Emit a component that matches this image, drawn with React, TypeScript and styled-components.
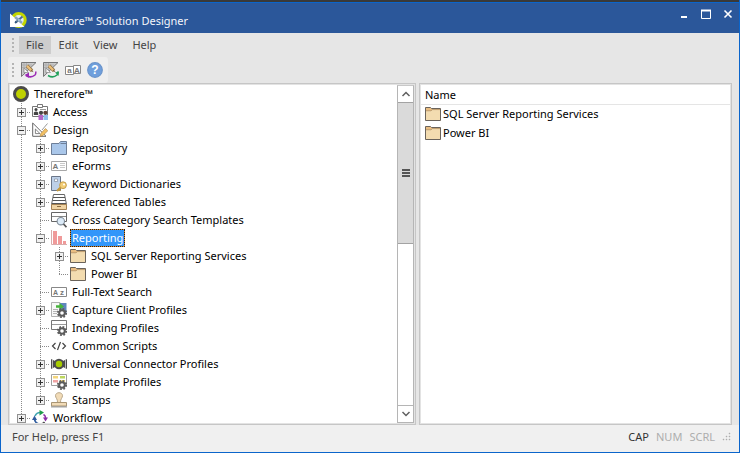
import React from "react";
import styled, { createGlobalStyle, css } from "styled-components";

const GlobalStyle = createGlobalStyle`
  * { box-sizing: border-box; }
  html, body { margin: 0; padding: 0; }
  body {
    font-family: "Noto Sans", "Open Sans", sans-serif;
    font-size: 11px;
    line-height: 18px;
    color: #000;
  }
  button { font: inherit; color: inherit; border: 0; padding: 0; background: none; }
`;

/* ---------- icons ---------- */

const ink = "#5c5c5c";

const Svg = styled.svg.attrs<{ $size?: number }>({ "aria-hidden": true })<{ $size?: number }>`
  display: block;
  flex: none;
  width: ${(p) => p.$size ?? 16}px;
  height: ${(p) => p.$size ?? 16}px;
`;

const Glyph = styled.text`
  font-family: "Liberation Sans", sans-serif;
  font-weight: 700;
  fill: #777;
`;

const Gear = () => (
  <g transform="translate(11 11)">
    <circle r="4.2" fill="none" stroke={ink} strokeWidth="1.8" strokeDasharray="1.8 1.5" />
    <circle r="2.8" fill="#fff" stroke={ink} strokeWidth="2" />
  </g>
);

const AppLogo = () => (
  <Svg $size={17} viewBox="0 0 17 17">
    <circle cx="8.7" cy="8" r="6.5" fill="#e4edf2" stroke="#c3d600" strokeWidth="3" />
    <path d="M0 1.5 V15 H14.5 Z" fill="#fff" />
    <path d="M5 5 L12 11" stroke="#8ba5bb" strokeWidth="2.4" />
    <path d="M5 11 L12.5 4.5" stroke="#4d6f92" strokeWidth="2" />
    <path d="M5 8.5 V11 H7.5 Z" fill="#34577f" />
    <circle cx="8.8" cy="8" r="1.2" fill="#a9c2d6" />
  </Svg>
);

const RootIcon = () => (
  <Svg viewBox="0 0 16 16">
    <circle cx="8" cy="8" r="6.5" fill="#bfd100" stroke="#4b4b4b" strokeWidth="3" />
  </Svg>
);

const AccessIcon = () => (
  <Svg viewBox="0 0 16 16">
    <path d="M.5 2.5 H15.5 V12.5 H.5 Z" fill="#fff" stroke="#777" />
    <path d="M5.5 .5 H10.5 V3.5 H5.5 Z" fill="#fff" stroke="#777" />
    <circle cx="4" cy="5.6" r="1.5" fill="#444" />
    <path d="M1.8 11 V8.4 Q4 6.6 6.2 8.4 V11 Z" fill="#444" />
    <path d="M8 5.5 H14" stroke="#999" />
    <circle cx="9" cy="8.8" r="2.1" fill="#444" />
    <circle cx="13.4" cy="8.8" r="2.1" fill="#5e4036" />
    <path d="M6.5 11 H11 V16 H6.5 Z" fill="#b565c7" />
    <path d="M11.5 11 H16 V16 H11.5 Z" fill="#8fc0ee" />
  </Svg>
);

const DesignIcon = () => (
  <Svg viewBox="0 0 16 16">
    <path d="M.7 1 V14.3 H14 Z" fill="#fff" stroke="#666" />
    <path d="M3.4 7 V11.6 H8 Z" fill="#fff" stroke="#777" strokeWidth=".9" />
    <path d="M15.5 1.5 L10 8" stroke="#999" />
    <path d="M8 14.5 L8.8 11.5 L13.5 6.5 L15.8 8.7 L11 13.5 Z" fill="#f2c063" stroke="#a98243" strokeWidth=".6" />
  </Svg>
);

const TanFolder = () => (
  <Svg viewBox="0 0 16 16">
    <path d="M.5 14.5 V1.5 H5.5 L6.5 2.5 H15.5 V14.5 Z" fill="#e9bd82" stroke="#6a635b" />
    <path d="M1 5 H6 L7.5 3.7 H15 V14 H1 Z" fill="#f3dcb0" />
    <path d="M1 4.8 H6 L7.5 3.6 H15" fill="none" stroke="#a08560" strokeWidth=".6" />
  </Svg>
);

const BlueFolder = () => (
  <Svg viewBox="0 0 16 16">
    <path d="M.5 14.5 V3.5 H8 L9.5 1.5 H15.5 V14.5 Z" fill="#aac7ea" stroke="#6e7f98" />
    <path d="M9.5 3.5 H15" stroke="#6e7f98" />
  </Svg>
);

const FormIcon = () => (
  <Svg viewBox="0 0 16 16">
    <path d="M.5 3.5 H15.5 V12.5 H.5 Z" fill="#fff" stroke="#a8a8a8" />
    <Glyph x="1.6" y="11" fontSize="8">A</Glyph>
    <path d="M9 5.5 H14 M9 7.5 H14 M9 9.5 H14" stroke="#c8c8c8" />
  </Svg>
);

const KeywordIcon = () => (
  <Svg viewBox="0 0 16 16">
    <path d="M.5 .5 H9.5 V14.5 H.5 Z" fill="#bdd0e8" stroke="#6b7688" />
    <path d="M3.5 3 H6.5 V5.5 H3.5 Z" fill="#fff" stroke="#7f8b9c" strokeWidth=".7" />
    <path d="M10.5 10.5 L6 15" stroke="#c79b3d" strokeWidth="2" />
    <path d="M7.5 12.8 L9.5 14.8" stroke="#c79b3d" strokeWidth="1.3" />
    <circle cx="12" cy="9.2" r="3.4" fill="#f4cf78" stroke="#b88d38" strokeWidth=".8" />
    <circle cx="13" cy="8.4" r="1" fill="#fff" />
  </Svg>
);

const TablesIcon = () => (
  <Svg viewBox="0 0 16 16">
    <path d="M2.5 .5 H13.5 L15.5 10.5 H.5 Z" fill="#fff" stroke="#666" />
    <path d="M2 3.5 H14 M1.6 6.5 H14.4" stroke="#555" />
    <path d="M1 9.5 H15" stroke="#555" />
    <path d="M.5 10.5 H15.5 V15.5 H.5 Z" fill="#f0d3a2" stroke="#a48152" />
    <path d="M6 12.5 H10" stroke="#8b6b40" />
  </Svg>
);

const SearchTemplateIcon = () => (
  <Svg viewBox="0 0 16 16">
    <path d="M.5 .5 H15.5 V9.5 H.5 Z" fill="#fff" stroke="#666" />
    <path d="M1 4.5 H15" stroke="#888" />
    <circle cx="9.8" cy="9.2" r="3.7" fill="#dcebf8" stroke="#7d8995" strokeWidth="1.1" />
    <path d="M12.5 12 L15.5 15.2" stroke="#555" strokeWidth="1.8" />
  </Svg>
);

const ReportIcon = () => (
  <Svg viewBox="0 0 16 16">
    <path d="M.5 0 V14.5 H16" fill="none" stroke="#d8adad" />
    <path d="M2 1 H6 V14 H2 Z M7 6 H11 V14 H7 Z M12 11 H15 V14 H12 Z" fill="#f09a9a" />
  </Svg>
);

const FullTextIcon = () => (
  <Svg viewBox="0 0 16 16">
    <path d="M.5 3.5 H15.5 V12.5 H.5 Z" fill="#fff" stroke="#888" />
    <Glyph x="2" y="10.8" fontSize="7">A</Glyph>
    <Glyph x="9" y="10.8" fontSize="8">z</Glyph>
  </Svg>
);

const CaptureIcon = () => (
  <Svg viewBox="0 0 16 16">
    <path d="M.5 .5 H9 V14.5 H.5 Z" fill="#f8f8f8" stroke="#b0b0b0" />
    <path d="M9 1 H15.5 V12 H9 Z" fill="#5f86bd" />
    <path d="M2 7.5 H7 M2 9.5 H6 M2 11.5 H6" stroke="#b5b5b5" />
    <path d="M5 3.3 H8.5 V1 L13 4.5 L8.5 8 V5.7 H5 Z" fill="#48b53d" />
    <Gear />
  </Svg>
);

const IndexingIcon = () => (
  <Svg viewBox="0 0 16 16">
    <path d="M.5 .5 H15.5 V9.5 H.5 Z" fill="#fff" stroke="#777" />
    <path d="M1 4.5 H15" stroke="#999" />
    <Gear />
  </Svg>
);

const ScriptIcon = () => (
  <Svg viewBox="0 0 16 16">
    <path d="M4.5 5 L1.5 8 L4.5 11 M11.5 5 L14.5 8 L11.5 11 M9.5 4 L6.5 12" fill="none" stroke="#444" strokeWidth="1.2" />
  </Svg>
);

const ConnectorIcon = () => (
  <Svg viewBox="0 0 16 16">
    <path d="M0 3 L4 5 V11 L0 13 Z M16 3 L12 5 V11 L16 13 Z" fill="#4d4d4d" />
    <path d="M1.5 3 V13 M14.5 3 V13" stroke="#d5d5d5" strokeWidth=".8" />
    <circle cx="8" cy="8" r="4.2" fill="#a8cc00" stroke="#4d4d4d" strokeWidth="2" />
  </Svg>
);

const TemplateIcon = () => (
  <Svg viewBox="0 0 16 16">
    <path d="M.5 .5 H15.5 V11.5 H.5 Z" fill="#fff" stroke="#a0a0a0" />
    <path d="M2 2 H7 V4.5 H2 Z M9 6 H14 V8 H9 Z" fill="#f3d57c" />
    <path d="M9 2 H14 V4.5 H9 Z" fill="#bcd65d" />
    <path d="M2 6 H7 V8.5 H2 Z" fill="#f0a3a3" />
    <Gear />
  </Svg>
);

const StampIcon = () => (
  <Svg viewBox="0 0 16 16">
    <path d="M6.5 10.5 C6.8 7 4.5 6 4.5 3.7 C4.5 -.3 11.5 -.3 11.5 3.7 C11.5 6 9.2 7 9.5 10.5 Z" fill="#f1dbb7" stroke="#b8a688" />
    <path d="M.5 10.5 H15.5 V14 H.5 Z" fill="#f1dbb7" stroke="#a99574" />
    <path d="M0 14.9 H16" stroke="#888" />
  </Svg>
);

const WorkflowIcon = () => (
  <Svg viewBox="0 0 16 16">
    <path d="M3 6 A5.8 5.8 0 0 1 8.5 2.5" fill="none" stroke="#42a7b3" strokeWidth="1.6" />
    <path d="M7.5 0 L12 2.5 L7.5 5.5 Z" fill="#1f9b4a" />
    <path d="M11.5 4.5 Q13.5 5.5 13.6 8" fill="none" stroke="#8a2da5" strokeWidth="1.6" />
    <path d="M11 7.5 H16 L13.5 11.5 Z" fill="#8a2da5" />
    <path d="M0 10 L2.5 5.5 L5 10 Z" fill="#2f5c9e" />
    <path d="M2.5 9.5 Q3.5 13.5 7.5 14" fill="none" stroke="#2f5c9e" strokeWidth="1.6" />
    <path d="M12.5 12 Q11 14 8 14" fill="none" stroke="#444" strokeWidth="1.6" />
  </Svg>
);

const ConnectTool = ({ color, reverse }: { color: string; reverse?: boolean }) => (
  <Svg viewBox="0 0 16 16">
    <path d="M.5 .5 H15 L.5 14.5 Z" fill="#c9c9c9" stroke="#777" />
    <path d="M1 3 H11 M1 5.5 H9 M3 1 V11 M5.5 1 V9" stroke="#aaa" strokeWidth=".8" />
    <path d="M3 10.5 V6 L7.5 10.5 Z" fill="#f5f5f5" stroke="#888" strokeWidth=".7" />
    <path d="M6 3.7 L11 8.7" stroke="#8a6a40" strokeWidth="3.4" />
    <path d="M6 3.9 L10.8 8.7" stroke="#ecc07a" strokeWidth="2.2" />
    <path d="M10.8 7.5 L12.6 10.3 L9.5 9 Z" fill="#7a5e3c" />
    <path d="M5 13.5 Q10 16.5 14 13 Q15 12 14.8 9.5" fill="none" stroke={color} strokeWidth="1.5" />
    {reverse ? <path d="M12 10.5 L16 9.5 L15.5 14 Z" fill={color} /> : <path d="M8 10.5 V15.8 L3.5 13 Z" fill={color} />}
  </Svg>
);

const TranslateTool = () => (
  <Svg viewBox="0 0 16 16">
    <path d="M.5 4.5 H8.5 V12.5 H.5 Z M8.5 3.5 H15.5 V11.5 H8.5 Z" fill="#fff" stroke="#888" />
    <Glyph x="2.3" y="11.3" fontSize="8">a</Glyph>
    <Glyph x="9.1" y="10.5" fontSize="8">A</Glyph>
  </Svg>
);

const HelpTool = () => (
  <Svg viewBox="0 0 16 16">
    <circle cx="8" cy="8" r="7.3" fill="#6f9fdc" stroke="#6a94cb" strokeWidth="1.2" />
    <text x="8" y="12.2" textAnchor="middle" fontSize="12" fontWeight="700" fill="#fff" fontFamily="Liberation Sans, sans-serif">?</text>
  </Svg>
);

/* ---------- frame ---------- */

const Frame = styled.div`
  height: 100vh;
  display: flex;
  flex-direction: column;
  border: 1px solid #0b65cb;
  border-top: 0;
  background: #e6e6e6;
`;

const TitleBar = styled.header`
  flex: none;
  height: 33px;
  display: flex;
  align-items: center;
  gap: 7px;
  padding: 6px 3px 0 9px;
  border-top: 2px solid #393939;
  box-shadow: inset 0 1px #0b65cb;
  background: #2b579a;
  color: #fff;
`;

const Title = styled.h1`
  flex: 1;
  margin: 0;
  font-size: 11px;
  font-weight: 400;
  color: #f4f6fa;
`;

const Controls = styled.div`
  display: flex;
  gap: 6px;
  align-self: flex-start;
`;

const ControlButton = styled.button`
  width: 16px;
  height: 12px;
  display: grid;
  place-items: center;
`;

const MenuBar = styled.nav`
  flex: none;
  display: flex;
  align-items: center;
  gap: 1px;
  padding: 3px 11px;
  color: #444;
`;

const Grip = styled.span`
  width: 2px;
  height: 14px;
  margin-right: 4px;
  background: repeating-linear-gradient(#b4b4b4 0 2px, transparent 2px 4px);
`;

const MenuButton = styled.button<{ $active?: boolean }>`
  height: 18px;
  padding: 0 7px;
  ${(p) => p.$active && css`background: #cdcdcd;`}
`;

const Toolbar = styled.div`
  flex: none;
  align-self: flex-start;
  height: 26px;
  display: flex;
  align-items: center;
  gap: 6px;
  padding: 0 5px 0 4px;
  margin-left: 7px;
  border-radius: 3px;
  background: #efefef;

  ${Grip} { margin-right: 1px; }
`;

const ToolButton = styled.button`
  width: 16px;
  height: 16px;
`;

const Panes = styled.main`
  flex: 1;
  min-height: 0;
  display: grid;
  grid-template-columns: 408fr 313fr;
  gap: 3px;
  padding: 0 7px;
`;

const Pane = styled.section`
  min-width: 0;
  min-height: 0;
  display: flex;
  overflow: hidden;
  border: 1px solid #c6c6c6;
  box-shadow: inset 0 0 0 1px #e3e3e3;
  padding: 1px;
  background: #fff;
`;

/* ---------- tree ---------- */

const Tree = styled.div`
  flex: 1;
  min-width: 0;
  overflow: hidden;
  padding-left: 2px;
`;

const Row = styled.div`
  height: 18px;
  display: flex;
  align-items: center;
  white-space: nowrap;
`;

type Line = "none" | "through" | "tee" | "end";

const lineHeight: Record<Line, string> = { none: "0", through: "100%", tee: "100%", end: "9px" };

const Guide = styled.span<{ $line: Line }>`
  flex: none;
  width: 19px;
  height: 18px;
  display: grid;
  place-items: center;
  background-image: repeating-linear-gradient(#8a8a8a 0 1px, transparent 1px 2px),
    repeating-linear-gradient(to right, #8a8a8a 0 1px, transparent 1px 2px);
  background-repeat: no-repeat;
  background-position: 9px 0, 9px 9px;
  background-size: 1px ${(p) => lineHeight[p.$line]},
    ${(p) => (p.$line === "tee" || p.$line === "end" ? "10px 1px" : "0 0")};
`;

const Expander = styled.button<{ $open: boolean }>`
  width: 9px;
  height: 9px;
  border: 1px solid #919191;
  background: linear-gradient(#333, #333) center / 5px 1px no-repeat,
    ${(p) => !p.$open && "linear-gradient(#333, #333) center / 1px 5px no-repeat,"} #f0f0f0;
`;

const IconCell = styled.span`
  flex: none;
  width: 20px;
  padding-left: 1px;
`;

const Label = styled.span<{ $selected?: boolean }>`
  padding: 0 2px;
  ${(p) =>
    p.$selected &&
    css`
      color: #fff;
      background: #3296fa;
      box-shadow: inset 0 0 0 1px #e08a2c;
      outline: 1px dotted #222;
      outline-offset: -1px;
    `}
`;

type Item = {
  label: string;
  icon: React.ComponentType;
  guides: Line[];
  toggle?: "open" | "closed";
  selected?: boolean;
};

const items: Item[] = [
  { label: "Therefore™", icon: RootIcon, guides: [] },
  { label: "Access", icon: AccessIcon, guides: ["tee"], toggle: "closed" },
  { label: "Design", icon: DesignIcon, guides: ["tee"], toggle: "open" },
  { label: "Repository", icon: BlueFolder, guides: ["through", "tee"], toggle: "closed" },
  { label: "eForms", icon: FormIcon, guides: ["through", "tee"], toggle: "closed" },
  { label: "Keyword Dictionaries", icon: KeywordIcon, guides: ["through", "tee"], toggle: "closed" },
  { label: "Referenced Tables", icon: TablesIcon, guides: ["through", "tee"], toggle: "closed" },
  { label: "Cross Category Search Templates", icon: SearchTemplateIcon, guides: ["through", "tee"] },
  { label: "Reporting", icon: ReportIcon, guides: ["through", "tee"], toggle: "open", selected: true },
  { label: "SQL Server Reporting Services", icon: TanFolder, guides: ["through", "through", "tee"], toggle: "closed" },
  { label: "Power BI", icon: TanFolder, guides: ["through", "through", "end"] },
  { label: "Full-Text Search", icon: FullTextIcon, guides: ["through", "tee"] },
  { label: "Capture Client Profiles", icon: CaptureIcon, guides: ["through", "tee"], toggle: "closed" },
  { label: "Indexing Profiles", icon: IndexingIcon, guides: ["through", "tee"] },
  { label: "Common Scripts", icon: ScriptIcon, guides: ["through", "tee"] },
  { label: "Universal Connector Profiles", icon: ConnectorIcon, guides: ["through", "tee"], toggle: "closed" },
  { label: "Template Profiles", icon: TemplateIcon, guides: ["through", "tee"], toggle: "closed" },
  { label: "Stamps", icon: StampIcon, guides: ["through", "end"], toggle: "closed" },
  { label: "Workflow", icon: WorkflowIcon, guides: ["tee"], toggle: "closed" },
];

const TreeRow = ({ label, icon: Icon, guides, toggle, selected }: Item) => (
  <Row role="treeitem" aria-level={guides.length + 1} aria-selected={!!selected} aria-expanded={toggle ? toggle === "open" : undefined}>
    {guides.map((line, i) => (
      <Guide key={i} $line={line}>
        {toggle && i === guides.length - 1 && (
          <Expander $open={toggle === "open"} aria-label={`${toggle === "open" ? "Collapse" : "Expand"} ${label}`} />
        )}
      </Guide>
    ))}
    <IconCell><Icon /></IconCell>
    <Label $selected={selected}>{label}</Label>
  </Row>
);

/* ---------- scroll bar ---------- */

const ScrollBar = styled.div`
  flex: none;
  width: 17px;
  display: flex;
  flex-direction: column;
  border: 1px solid #b5b5b5;
  border-top-color: #c8c8c8;
`;

const ScrollButton = styled.button`
  flex: none;
  height: 16px;
  display: grid;
  place-items: center;
`;

const Track = styled.div`
  flex: 1;
  border-bottom: 1px solid #b5b5b5;
`;

const Thumb = styled.div`
  height: 47%;
  display: grid;
  place-items: center;
  border: solid #a3a3a3;
  border-width: 1px 0;
  background: #dadada;
`;

const ThumbGrip = styled.span`
  width: 8px;
  height: 8px;
  background: repeating-linear-gradient(#555 0 2px, transparent 2px 3px);
`;

const Chevron = ({ down }: { down?: boolean }) => (
  <Svg $size={10} viewBox="0 0 10 10">
    <path d={down ? "M1.5 3 L5 6.5 L8.5 3" : "M1.5 7 L5 3.5 L8.5 7"} fill="none" stroke="#606060" strokeWidth="1.5" />
  </Svg>
);

/* ---------- list ---------- */

const List = styled.table`
  width: 100%;
  align-self: flex-start;
  border-collapse: collapse;
`;

const HeadCell = styled.th`
  height: 19px;
  padding: 1px 4px 0;
  text-align: left;
  font-weight: 400;
  border-bottom: 1px solid #e5e5e5;
`;

const Cell = styled.td`
  height: 19px;
  padding: 0 4px;
`;

const Entry = styled.span`
  display: flex;
  align-items: center;
  gap: 2px;
`;

/* ---------- status ---------- */

const StatusBar = styled.footer`
  flex: none;
  height: 27px;
  display: flex;
  align-items: center;
  gap: 7px;
  padding: 0 8px 4px 11px;
  background: #f0f0f0;
  color: #444;
`;

const StatusText = styled.span`
  flex: 1;
`;

const KeyState = styled.span<{ $on?: boolean }>`
  color: ${(p) => (p.$on ? "#333" : "#adadad")};
`;

const SizeGrip = () => (
  <Svg $size={9} viewBox="0 0 9 9">
    <path d="M7 1h1v1h-1z M4 4h1v1h-1z M7 4h1v1h-1z M1 7h1v1h-1z M4 7h1v1h-1z M7 7h1v1h-1z" fill="#999" stroke="#bbb" strokeWidth=".5" />
  </Svg>
);

export default function App() {
  return (
    <>
      <GlobalStyle />
      <Frame>
        <TitleBar>
          <AppLogo />
          <Title>Therefore™ Solution Designer</Title>
          <Controls>
            <ControlButton aria-label="Minimize">
              <Svg $size={10} viewBox="0 0 10 10"><path d="M2 8 H8" stroke="#fff" strokeWidth="2" /></Svg>
            </ControlButton>
            <ControlButton aria-label="Maximize">
              <Svg $size={10} viewBox="0 0 10 10"><path d="M.5 1 V9.5 H9.5 V1" fill="none" stroke="#fff" /><path d="M0 1.5 H10" stroke="#fff" strokeWidth="2" /></Svg>
            </ControlButton>
            <ControlButton aria-label="Close">
              <Svg $size={10} viewBox="0 0 10 10"><path d="M1.5 1.5 L8.5 8.5 M8.5 1.5 L1.5 8.5" stroke="#fff" strokeWidth="1.6" /></Svg>
            </ControlButton>
          </Controls>
        </TitleBar>
        <MenuBar>
          <Grip />
          <MenuButton $active>File</MenuButton>
          <MenuButton>Edit</MenuButton>
          <MenuButton>View</MenuButton>
          <MenuButton>Help</MenuButton>
        </MenuBar>
        <Toolbar role="toolbar">
          <Grip />
          <ToolButton aria-label="Connect"><ConnectTool color="#9b2bb5" /></ToolButton>
          <ToolButton aria-label="Reconnect"><ConnectTool color="#23a05a" reverse /></ToolButton>
          <ToolButton aria-label="Translate"><TranslateTool /></ToolButton>
          <ToolButton aria-label="Help"><HelpTool /></ToolButton>
        </Toolbar>
        <Panes>
          <Pane>
            <Tree role="tree">
              {items.map((item, i) => <TreeRow key={i} {...item} />)}
            </Tree>
            <ScrollBar>
              <ScrollButton aria-label="Scroll up"><Chevron /></ScrollButton>
              <Track><Thumb><ThumbGrip /></Thumb></Track>
              <ScrollButton aria-label="Scroll down"><Chevron down /></ScrollButton>
            </ScrollBar>
          </Pane>
          <Pane>
            <List>
              <thead><tr><HeadCell scope="col">Name</HeadCell></tr></thead>
              <tbody>
                <tr><Cell><Entry><TanFolder />SQL Server Reporting Services</Entry></Cell></tr>
                <tr><Cell><Entry><TanFolder />Power BI</Entry></Cell></tr>
              </tbody>
            </List>
          </Pane>
        </Panes>
        <StatusBar>
          <StatusText>For Help, press F1</StatusText>
          <KeyState $on>CAP</KeyState>
          <KeyState>NUM</KeyState>
          <KeyState>SCRL</KeyState>
          <SizeGrip />
        </StatusBar>
      </Frame>
    </>
  );
}
